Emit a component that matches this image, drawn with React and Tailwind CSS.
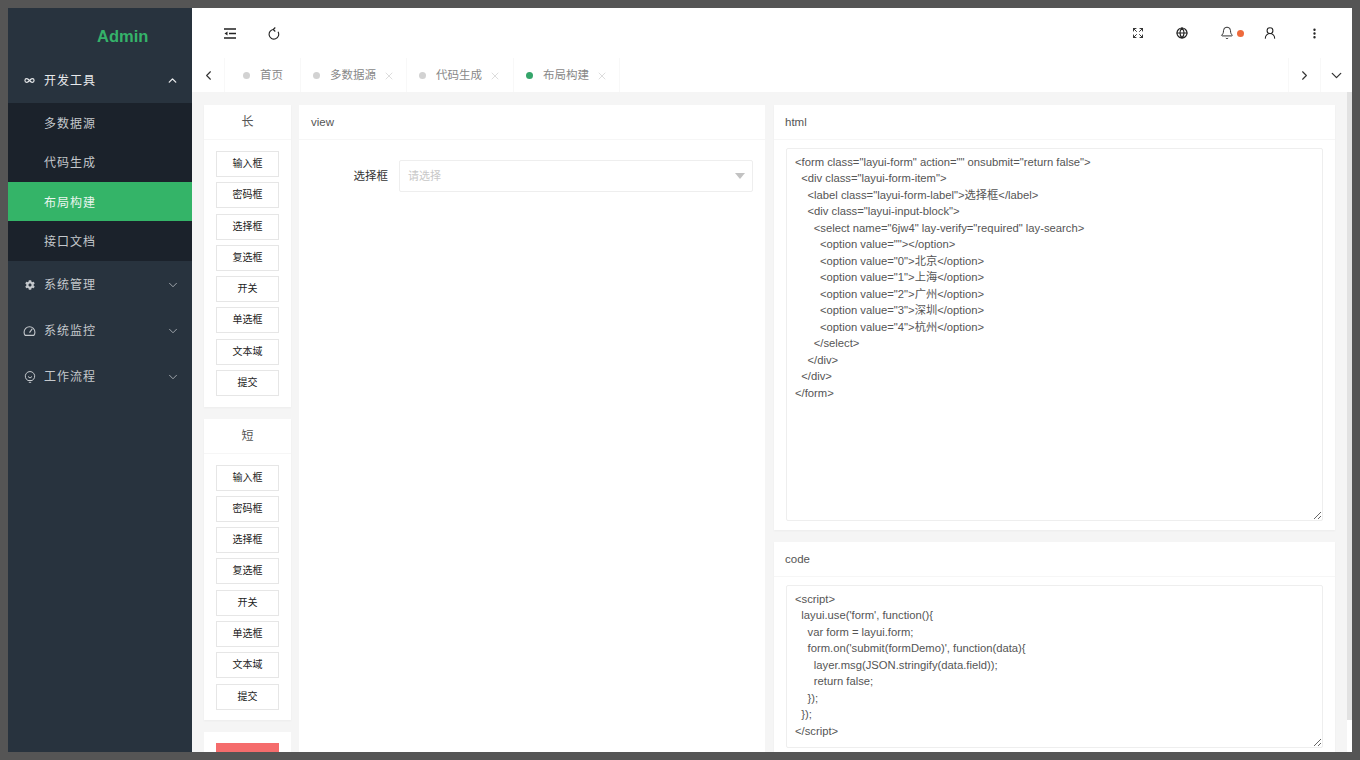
import {
  ChevronDown, ChevronLeft, ChevronRight, ChevronUp, Bell, Globe, EllipsisVertical,
  Expand, Infinity as InfinityIcon, UserRound, X,
} from 'lucide-react';
import { FaCog } from 'react-icons/fa';

const GaugeIcon = ({ className }) => (
  <svg viewBox="0 0 12 12" width="13" height="13" fill="none" stroke="currentColor" strokeWidth="1" className={className}>
    <path d="M2 10.5h8a5 5 0 0 0 1-3A5 5 0 0 0 1 7.500a5 5 0 0 0 1 3z" />
    <path d="M6 8l2.500-3.500" />
  </svg>
);

const BulbIcon = ({ className }) => (
  <svg viewBox="0 0 12 12" width="12" height="12" fill="none" stroke="currentColor" strokeWidth="1" className={className}>
    <path d="M4 9.500A4.700 4.700 0 1 1 8 9.500z" />
    <path d="M4.800 11.300h2.400" />
    <path d="M4 5.500l2 1.500 2-1.500" />
  </svg>
);

const FoldIcon = ({ className }) => (
  <svg viewBox="0 0 12 11" width="12" height="11" className={className}>
    <path d="M0 1h12M5 5.500h7M0 10h12" stroke="currentColor" strokeWidth="1.500" fill="none" />
    <path d="M0.500 5.500L3.500 3.500v4z" fill="currentColor" />
  </svg>
);

const RefreshIcon = ({ className }) => (
  <svg viewBox="0 0 12 13" width="12" height="13" fill="none" stroke="currentColor" strokeWidth="1.100" className={className}>
    <path d="M6 2.500A4.800 4.800 0 1 0 10 4.800" />
    <path d="M7.300 0.500L5.200 2.500l2.100 2" />
  </svg>
);

const subMenu = ['多数据源', '代码生成', '布局构建', '接口文档'];
const menus = [
  { name: '系统管理', icon: <FaCog size={10} className="mx-[1px]" /> },
  { name: '系统监控', icon: <GaugeIcon className="-ml-[1px]" /> },
  { name: '工作流程', icon: <BulbIcon /> },
];
const tabs = [
  { name: '首页', w: 'w-[76px] pl-[18px]' },
  { name: '多数据源', w: 'w-[106px] pl-[12px]', close: true },
  { name: '代码生成', w: 'w-[107px] pl-[12px]', close: true },
  { name: '布局构建', w: 'w-[106px] pl-[12px]', close: true, active: true },
];
const widgets = ['输入框', '密码框', '选择框', '复选框', '开关', '单选框', '文本域', '提交'];

const htmlCode = `<form class="layui-form" action="" onsubmit="return false">
  <div class="layui-form-item">
    <label class="layui-form-label">选择框</label>
    <div class="layui-input-block">
      <select name="6jw4" lay-verify="required" lay-search>
        <option value=""></option>
        <option value="0">北京</option>
        <option value="1">上海</option>
        <option value="2">广州</option>
        <option value="3">深圳</option>
        <option value="4">杭州</option>
      </select>
    </div>
  </div>
</form>`;

const jsCode = `<script>
  layui.use('form', function(){
    var form = layui.form;
    form.on('submit(formDemo)', function(data){
      layer.msg(JSON.stringify(data.field));
      return false;
    });
  });
</script>`;

function Sidebar() {
  return (
    <aside className="w-[184px] shrink-0 bg-[#28333e] text-[12px] tracking-[1px] text-[#c4c8cc] shadow-[1px_0_3px_rgba(0,0,0,0.15)]">
      <div className="h-[50px] pl-[89px] pt-[16px] text-[16.5px] leading-[24px] font-bold tracking-normal text-[#35b36a]">Admin</div>
      <div className="flex h-[45.300px] items-center pl-[16px] pr-[13px] text-[#e8eaec]">
        <InfinityIcon size={11} strokeWidth={2.500} className="mr-[9px]" />
        <span className="flex-1">开发工具</span>
        <ChevronUp size={13} strokeWidth={2.500} />
      </div>
      <div className="bg-[#1b222b]">
        {subMenu.map((item) => (
          <div
            key={item}
            className={`flex h-[39.400px] items-center pl-[36px] pt-[2px] ${item === '布局构建' ? 'bg-[#34b468] text-[#eaf6ef]' : ''}`}
          >
            {item}
          </div>
        ))}
      </div>
      {menus.map(({ name, icon }) => (
        <div key={name} className="flex h-[46px] items-center pl-[16px] pr-[12px] pt-[2px]">
          <span className="flex w-[20px] shrink-0 items-center">{icon}</span>
          <span className="flex-1">{name}</span>
          <ChevronDown size={14} strokeWidth={1.300} />
        </div>
      ))}
    </aside>
  );
}

function Header() {
  return (
    <header className="flex h-[50px] shrink-0 items-center bg-white text-[#222]">
      <FoldIcon className="ml-[32px]" />
      <RefreshIcon className="ml-[32px]" />
      <div className="flex-1" />
      <Expand size={12} strokeWidth={1.800} className="mr-[32px]" />
      <Globe size={12} strokeWidth={2.400} className="mr-[32px]" />
      <Bell size={14} strokeWidth={1.600} />
      <span className="ml-[3px] mr-[19px] h-[7px] w-[7px] rounded-full bg-[#ee6a3c]" />
      <UserRound size={14} strokeWidth={1.800} className="mr-[31px]" />
      <EllipsisVertical size={13} strokeWidth={2.400} className="mr-[31px]" />
    </header>
  );
}

function TabBar() {
  return (
    <nav className="flex h-[34px] shrink-0 items-stretch bg-white text-[11.500px] text-[#888]">
      <div className="flex w-[33px] items-center justify-center border-r border-[#f8f8f8] text-[#333]">
        <ChevronLeft size={15} strokeWidth={1.800} />
      </div>
      {tabs.map((tab) => (
        <div key={tab.name} className={`${tab.w} flex items-center border-r border-[#f8f8f8] pt-[1px]`}>
          <span className={`mr-[10px] h-[7px] w-[7px] rounded-full ${tab.active ? 'bg-[#35a56a]' : 'bg-[#d2d2d2]'}`} />
          <span>{tab.name}</span>
          {tab.close && <X size={12} strokeWidth={1} className="ml-[7px] text-[#bbb]" />}
        </div>
      ))}
      <div className="flex-1" />
      <div className="flex w-[32px] items-center justify-center border-l border-[#f8f8f8] text-[#333]">
        <ChevronRight size={15} strokeWidth={1.800} />
      </div>
      <div className="flex w-[32px] items-center justify-center border-l border-[#f8f8f8] text-[#333]">
        <ChevronDown size={17} strokeWidth={1.800} />
      </div>
    </nav>
  );
}

function WidgetCard({ title }) {
  return (
    <section className="shrink-0 bg-white shadow-[0_1px_2px_rgba(0,0,0,0.04)]">
      <div className="flex h-[35px] items-center justify-center border-b border-[#f6f6f6] text-[12px] text-[#555]">{title}</div>
      <div className="flex flex-col gap-[5.300px] px-[12px] pb-[10.500px] pt-[11px]">
        {widgets.map((w) => (
          <button key={w} className="h-[26px] border border-[#e6e6e6] bg-white text-[10px] leading-none text-[#222]">
            {w}
          </button>
        ))}
      </div>
    </section>
  );
}

function CodeCard({ title, code, cardClass, areaClass }) {
  return (
    <section className={`${cardClass} flex shrink-0 flex-col bg-white shadow-[0_1px_2px_rgba(0,0,0,0.04)]`}>
      <div className="flex h-[35px] shrink-0 items-center border-b border-[#f6f6f6] px-[11px] pt-[1px] text-[11.500px] text-[#555]">{title}</div>
      <div className="px-[12px] pt-[8px]">
        <textarea
          readOnly
          value={code}
          spellCheck={false}
          className={`${areaClass} block w-full resize-y overflow-hidden rounded-[2px] border border-[#eeeeee] px-[8px] py-[4.500px] text-[11.250px] leading-[16.500px] whitespace-pre text-[#555] outline-none`}
        />
      </div>
    </section>
  );
}

export default function App() {
  return (
    <div className="h-[760px] w-[1360px] overflow-hidden bg-[#555555] p-[8px] font-['Liberation_Sans','Noto_Sans_CJK_SC',sans-serif]">
      <div className="flex h-[744px] w-[1344px] overflow-hidden">
        <Sidebar />
        <div className="flex min-w-0 flex-1 flex-col">
          <Header />
          <TabBar />
          <div className="flex min-h-0 flex-1 bg-[#f5f5f5]">
            <main className="flex min-w-0 flex-1 gap-[8px] overflow-hidden pl-[12px] pr-[12px] pt-[13px]">
              <div className="flex w-[87px] shrink-0 flex-col gap-[12px]">
                <WidgetCard title="长" />
                <WidgetCard title="短" />
                <section className="h-[60px] shrink-0 bg-white px-[12px] pt-[11px]">
                  <button className="h-[26px] w-full bg-[#f56c6c]" />
                </section>
              </div>
              <section className="w-[466px] shrink-0 bg-white">
                <div className="flex h-[35px] items-center border-b border-[#f6f6f6] px-[12px] pt-[1px] text-[11.500px] text-[#555]">view</div>
                <div className="flex items-center pl-[12px] pr-[12px] pt-[20px]">
                  <label className="w-[77px] pt-[1px] text-right text-[11.500px] text-[#333]">选择框</label>
                  <div className="ml-[11px] flex h-[32px] flex-1 items-center rounded-[2px] border border-[#eeeeee] pl-[8px] pr-[7px] text-[11px] text-[#c8c8c8]">
                    <span className="flex-1">请选择</span>
                    <span className="h-0 w-0 border-x-[5px] border-t-[6px] border-x-transparent border-t-[#c2c2c2]" />
                  </div>
                </div>
              </section>
              <div className="ml-[1px] flex w-[561px] shrink-0 flex-col gap-[12px]">
                <CodeCard title="html" code={htmlCode} cardClass="h-[425px]" areaClass="h-[373px]" />
                <CodeCard title="code" code={jsCode} cardClass="h-[220px]" areaClass="h-[163px]" />
              </div>
            </main>
            <div className="flex w-[5px] shrink-0 flex-col bg-white">
              <div className="h-[628px] bg-[#e2e2e2]" />
            </div>
          </div>
        </div>
      </div>
    </div>
  );
}
